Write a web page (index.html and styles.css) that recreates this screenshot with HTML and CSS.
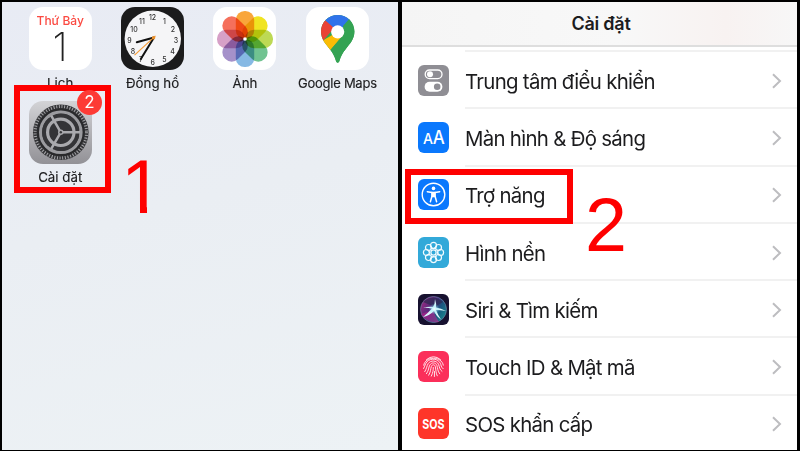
FILE: index.html
```html
<!DOCTYPE html>
<html lang="vi">
<head>
<meta charset="utf-8">
<title>Cài đặt</title>
<link rel="stylesheet" href="styles.css">
</head>
<body>
<main class="stage">
  <section class="home">
    <div class="apps">
      <div class="app">
        <div class="tile calendar"><span class="weekday">Thứ Bảy</span><span class="day">1</span></div>
        <span class="label">Lịch</span>
      </div>
      <div class="app">
        <svg class="tile" viewBox="0 0 63 63">
          <rect width="63" height="63" fill="#1b1b1c"/>
          <circle cx="31.8" cy="31.8" r="28.2" fill="#f5f5f7"/>
          <g class="numerals">
            <text x="31.5" y="13">12</text><text x="43.5" y="16.5">1</text><text x="52" y="25">2</text><text x="55" y="36">3</text><text x="51.5" y="47">4</text><text x="43.3" y="55">5</text><text x="31.7" y="58.2">6</text><text x="20" y="55">7</text><text x="12" y="47">8</text><text x="8.5" y="36">9</text><text x="13" y="25">10</text><text x="21" y="16.5">11</text>
          </g>
          <path d="M33 30.5L15.8 35.3M33 30.5L19.8 52" stroke="#111" stroke-width="2" stroke-linecap="round"/>
          <path d="M34.5 28.8L13.5 48.2" stroke="#f79a31" stroke-width="1.1"/>
          <circle cx="32.6" cy="30.8" r="1.7" fill="#e9902c"/>
        </svg>
        <span class="label">Đồng hồ</span>
      </div>
      <div class="app">
        <svg class="tile" viewBox="0 0 63 63">
          <rect width="63" height="63" fill="#fff"/>
          <g class="petals" transform="translate(32 32)">
            <rect x="-9.2" y="-28" width="18.4" height="28" rx="8.8" fill="#f9a63a"/>
            <rect x="-9.2" y="-28" width="18.4" height="28" rx="8.8" fill="#f0e422" transform="rotate(45)"/>
            <rect x="-9.2" y="-28" width="18.4" height="28" rx="8.8" fill="#bdd954" transform="rotate(90)"/>
            <rect x="-9.2" y="-28" width="18.4" height="28" rx="8.8" fill="#71c391" transform="rotate(135)"/>
            <rect x="-9.2" y="-28" width="18.4" height="28" rx="8.8" fill="#86b9e4" transform="rotate(180)"/>
            <rect x="-9.2" y="-28" width="18.4" height="28" rx="8.8" fill="#a591ca" transform="rotate(225)"/>
            <rect x="-9.2" y="-28" width="18.4" height="28" rx="8.8" fill="#d6a0c7" transform="rotate(270)"/>
            <rect x="-9.2" y="-28" width="18.4" height="28" rx="8.8" fill="#f5705c" transform="rotate(315)"/>
          </g>
          <circle cx="32" cy="32" r="1.8" fill="#fff"/>
        </svg>
        <span class="label">Ảnh</span>
      </div>
      <div class="app">
        <svg class="tile" viewBox="0 0 63 63">
          <defs><clipPath id="pin"><path d="M31.7 8C22.3 8 15 15.3 15 24.6c0 7.7 4.6 12.4 8.6 17.3 3.6 4.4 5 7.3 6.4 12 .7 2.3 2.7 2.3 3.4 0 1.4-4.7 2.8-7.6 6.4-12 4-4.9 8.6-9.6 8.6-17.3C48.4 15.3 41.1 8 31.7 8z"/></clipPath></defs>
          <rect width="63" height="63" fill="#fff"/>
          <g clip-path="url(#pin)">
            <path d="M0 0h63v63H0z" fill="#34a353"/>
            <path d="M31.7 24.8L38 27 24.4 43 8 46 16 34z" fill="#fbbc05"/>
            <path d="M12 39.5L17.2 33.4 31.7 17 19.6 13.4 8 16z" fill="#e94235"/>
            <path d="M19.4 13.4L27.5 20.5 31.7 24.8 45 14.5 40 0H20z" fill="#2f73ea"/>
            <path d="M37 19L43.8 11.3 56 20V60H30L24.4 43 37 28.5z" fill="#34a353"/>
          </g>
          <circle cx="31.7" cy="24.8" r="6.6" fill="#fff"/>
        </svg>
        <span class="label tight">Google Maps</span>
      </div>
      <div class="app">
        <svg class="tile" viewBox="0 0 63 63">
          <defs><linearGradient id="steel" x1="0" y1="0" x2="0" y2="1"><stop offset="0" stop-color="#d3d3d6"/><stop offset="1" stop-color="#929196"/></linearGradient></defs>
          <rect width="63" height="63" fill="url(#steel)"/>
          <g fill="none">
            <circle cx="31.8" cy="31.3" r="27.8" fill="#343437"/>
            <circle cx="31.8" cy="31.3" r="25.7" stroke="#a6a6a9" stroke-width="3.2" stroke-dasharray="1 1.69"/>
            <circle cx="31.8" cy="31.3" r="23" stroke="#29292b" stroke-width="2"/>
            <circle cx="31.8" cy="31.3" r="20.2" stroke="#9b9b9f" stroke-width="3.2"/>
            <circle cx="31.8" cy="31.3" r="16.8" stroke="#343437" stroke-width="4" stroke-dasharray="28.2 6.98" stroke-dashoffset="-3.5"/>
            <circle cx="31.8" cy="31.3" r="13.2" stroke="#a9a9ad" stroke-width="3.2"/>
            <path d="M31.8 31.3H51M31.8 31.3L22.2 14.7M31.8 31.3L22.2 47.9" stroke="#aaaaae" stroke-width="2.5"/>
            <circle cx="31.8" cy="31.3" r="2.7" fill="#aaaaae"/><circle cx="31.8" cy="31.3" r="1.2" fill="#38383a"/>
          </g>
        </svg>
        <span class="badge">2</span>
        <span class="label">Cài đặt</span>
      </div>
    </div>
    <div class="frame frame-one"></div>
    <span class="step step-one">1</span>
  </section>

  <section class="settings">
    <header class="bar"><h1>Cài đặt</h1></header>
    <ul class="list">
      <li class="row">
        <svg class="icon" viewBox="0 0 31 31"><rect width="31" height="31" fill="#8f8e94"/><rect x="7.2" y="5" width="16.8" height="8.6" rx="4.3" fill="none" stroke="#fff" stroke-width="1.3"/><circle cx="12" cy="9.3" r="3" fill="#fff"/><rect x="6.6" y="16.7" width="17.8" height="10" rx="5" fill="#fff"/><circle cx="19.2" cy="21.7" r="3.3" fill="#8f8e94"/></svg>
        <div class="cell"><span class="name">Trung tâm điểu khiển</span><svg class="chevron" viewBox="0 0 10 16"><path d="M1 1.2L8 8 1 14.8"/></svg></div>
      </li>
      <li class="row">
        <svg class="icon" viewBox="0 0 31 31"><rect width="31" height="31" fill="#0a78fd"/><g class="glyph"><text x="5" y="22.2" font-size="15" textLength="10" lengthAdjust="spacingAndGlyphs">A</text><text x="14.8" y="22.2" font-size="18" textLength="12" lengthAdjust="spacingAndGlyphs">A</text></g></svg>
        <div class="cell"><span class="name">Màn hình &amp; Độ sáng</span><svg class="chevron" viewBox="0 0 10 16"><path d="M1 1.2L8 8 1 14.8"/></svg></div>
      </li>
      <li class="row">
        <svg class="icon" viewBox="0 0 31 31"><rect width="31" height="31" fill="#0a78fd"/><circle cx="15.5" cy="15.5" r="11.3" fill="none" stroke="#fff" stroke-width="1.4"/><circle cx="15.5" cy="9.4" r="1.8" fill="#fff"/><path d="M9.3 12.7L14 13.5V17L12.4 22.7M21.7 12.7L17 13.5V17L18.6 22.7" fill="none" stroke="#fff" stroke-width="1.5" stroke-linecap="round" stroke-linejoin="round"/><path d="M13.4 12.8h4.2v5.4h-4.2z" fill="#fff"/></svg>
        <div class="cell"><span class="name">Trợ năng</span><svg class="chevron" viewBox="0 0 10 16"><path d="M1 1.2L8 8 1 14.8"/></svg></div>
      </li>
      <li class="row">
        <svg class="icon" viewBox="0 0 31 31"><rect width="31" height="31" fill="#32a9d9"/><g fill="none" stroke="#f2fbff" stroke-width="1.2"><circle cx="15.5" cy="15.5" r="2.6"/><circle cx="15.5" cy="8.4" r="3"/><circle cx="20.5" cy="10.5" r="3"/><circle cx="22.6" cy="15.5" r="3"/><circle cx="20.5" cy="20.5" r="3"/><circle cx="15.5" cy="22.6" r="3"/><circle cx="10.5" cy="20.5" r="3"/><circle cx="8.4" cy="15.5" r="3"/><circle cx="10.5" cy="10.5" r="3"/><circle cx="15.5" cy="15.5" r="4.8" stroke-width=".9" stroke-dasharray="1.9 1.87"/></g></svg>
        <div class="cell"><span class="name">Hình nền</span><svg class="chevron" viewBox="0 0 10 16"><path d="M1 1.2L8 8 1 14.8"/></svg></div>
      </li>
      <li class="row">
        <svg class="icon" viewBox="0 0 31 31">
          <defs>
            <linearGradient id="orb" x1="0" y1=".2" x2="1" y2=".8"><stop offset="0" stop-color="#a02a80"/><stop offset=".4" stop-color="#4f2a7c"/><stop offset=".65" stop-color="#1a5580"/><stop offset="1" stop-color="#198a8c"/></linearGradient>
            <radialGradient id="glow"><stop offset="0" stop-color="#fff"/><stop offset=".3" stop-color="#c9f5ff" stop-opacity=".7"/><stop offset="1" stop-color="#6de" stop-opacity="0"/></radialGradient>
          </defs>
          <rect width="31" height="31" fill="#17112f"/>
          <circle cx="15.5" cy="15.5" r="13" fill="url(#orb)" stroke="#6c7fa5" stroke-width=".7"/>
          <path d="M5 8Q15 -1 25 8L17 13z" fill="#2a2950" opacity=".7"/>
          <path d="M3 20Q9 18 15 16 17 22 21 28 10 30 3 20z" fill="#c51f8f" opacity=".55"/>
          <path d="M5 23Q10 19 14 14.5 9 13.5 5 14 11 12 15 13Q17 10 17 5 18.6 10 18 13.5 23 14 28 17 22 16 18 16 20 21 23 25.5 18 22 16 17 11 22 5 23z" fill="#d9f6fc"/>
          <circle cx="16.3" cy="15" r="5.5" fill="url(#glow)"/>
        </svg>
        <div class="cell"><span class="name">Siri &amp; Tìm kiếm</span><svg class="chevron" viewBox="0 0 10 16"><path d="M1 1.2L8 8 1 14.8"/></svg></div>
      </li>
      <li class="row">
        <svg class="icon" viewBox="0 0 31 31"><rect width="31" height="31" fill="#fb2f5a"/><g fill="none" stroke="#ffe1e8" stroke-width="1" stroke-linecap="round"><path d="M8.5 8.6Q15.5 2.7 22.5 8.6M5.7 14.2C7.2 4.8 23.8 4.8 25.3 14.2M5.6 17.5C7 15 7 13 9 10.7 13 6.7 20 7.6 22.4 12.4 23.2 14 22.8 16 25.2 17.8M6.8 20.6C9 17 8.5 15.2 10.2 12.6 13 8.7 18.5 9.5 20.5 13.2 21.6 16 21.3 18.5 24 20.4M8.5 22.7C11 19 10.5 16.5 11.7 14.2 13.5 11 17.5 11.3 18.9 14.4 19.8 17.5 19.5 20 21.7 22.8M10.7 24.2C13 20.5 12.4 18 13.4 15.4 14.2 13.2 16.7 13.3 17.3 15.6 18 19 17.8 22 19.2 24.8M13.3 25.1C15 21.5 15.4 19 15.3 16.5M16.4 25.5 16.5 20.5"/></g></svg>
        <div class="cell"><span class="name">Touch ID &amp; Mật mã</span><svg class="chevron" viewBox="0 0 10 16"><path d="M1 1.2L8 8 1 14.8"/></svg></div>
      </li>
      <li class="row">
        <svg class="icon" viewBox="0 0 31 31"><rect width="31" height="31" fill="#fe3529"/><g class="sos"><text x="4.2" y="20.5" textLength="22.3" lengthAdjust="spacingAndGlyphs">SOS</text></g></svg>
        <div class="cell"><span class="name">SOS khẩn cấp</span><svg class="chevron" viewBox="0 0 10 16"><path d="M1 1.2L8 8 1 14.8"/></svg></div>
      </li>
    </ul>
    <div class="frame frame-two"></div>
    <span class="step step-two">2</span>
  </section>
</main>
</body>
</html>
```
FILE: styles.css
```css
* { box-sizing: border-box; }
body { margin: 0; background: #000; font-family: Inter, "Noto Sans", sans-serif; color: #1c1c1e; }
.stage { display: grid; grid-template-columns: 396px 395px; gap: 4px; width: 800px; height: 451px; padding: 2px 3px 1px 2px; overflow: hidden; }
.home { position: relative; background: linear-gradient(165deg, #e8ebf4 0%, #eaeef3 45%, #edf2f5 100%); }
.apps { display: grid; grid-template-columns: repeat(4, 92.4px); grid-auto-rows: 93.7px; padding: 5px 0 0 12px; }
.app { position: relative; display: flex; flex-direction: column; align-items: center; }
.tile { width: 63px; height: 63px; border-radius: 14px; overflow: hidden; flex: none; }
.label { margin-top: 5px; font-size: 13.3px; line-height: 16px; white-space: nowrap; letter-spacing: 0; -webkit-text-stroke: .15px; }
.label.tight { font-size: 13px; letter-spacing: -.25px; }
.calendar { display: flex; flex-direction: column; align-items: center; background: #fff; }
.weekday { margin-top: 7px; font-size: 12px; line-height: 13px; font-weight: 500; color: #fb4a42; white-space: nowrap; }
.day { margin-top: 2px; font-size: 40px; line-height: 36px; font-weight: 200; color: #222; }
.numerals { font: 500 7px Inter, sans-serif; fill: #333; text-anchor: middle; }
.petals rect { mix-blend-mode: multiply; }
.petals { isolation: isolate; }
.badge { position: absolute; top: -11px; left: 63px; z-index: 2; width: 25px; height: 25px; border-radius: 50%; background: #fd3b35; color: #fff; font-size: 17px; line-height: 25px; text-align: center; }
.frame { position: absolute; border: 6px solid #fe0000; }
.frame-one { left: 12px; top: 83px; width: 97px; height: 108px; }
.step { position: absolute; color: #fe0000; font: 75.5px/76px "Liberation Sans", Arial, sans-serif; }
.step-one { left: 119px; top: 147px; clip-path: polygon(0 0, 100% 0, 100% 53px, 26px 53px, 26px 76px, 19px 76px, 19px 53px, 0 53px); }
.settings { position: relative; overflow: hidden; background: #fff; }
.bar { height: 45px; padding-top: 9px; border-bottom: 2px solid #dedede; background: linear-gradient(90deg, #f5f5f5 0%, #f8f8f8 55%, #f8f2f1 82%, #f7f7f7 100%); text-align: center; }
.bar h1 { margin: 0; padding-left: 3px; font-size: 18px; line-height: 26px; font-weight: 600; letter-spacing: -.25px; }
.list { list-style: none; margin: 3px 0 0; padding: 0; }
.row { display: flex; align-items: center; height: 57.3px; padding-left: 16px; }
.icon { width: 31px; height: 31px; margin-top: 3px; border-radius: 6px; flex: none; }
.cell { display: flex; align-items: center; justify-content: space-between; flex: 1; height: 100%; margin-left: 16px; padding: 2px 15px 0 0; border-top: 2px solid #f1f1f1; }
.name { padding-top: 2px; font-size: 20.4px; line-height: 28px; white-space: nowrap; letter-spacing: -.7px; }
.chevron { width: 10px; height: 16px; fill: none; stroke: #bdbdc0; stroke-width: 2; }
.glyph { font-family: Inter, sans-serif; font-weight: 500; fill: #fff; }
.sos { font: 700 13.5px Inter, sans-serif; fill: #fff; }
.frame-two { left: 3px; top: 167px; width: 168px; height: 55px; }
.step-two { left: 183px; top: 185px; }
```
